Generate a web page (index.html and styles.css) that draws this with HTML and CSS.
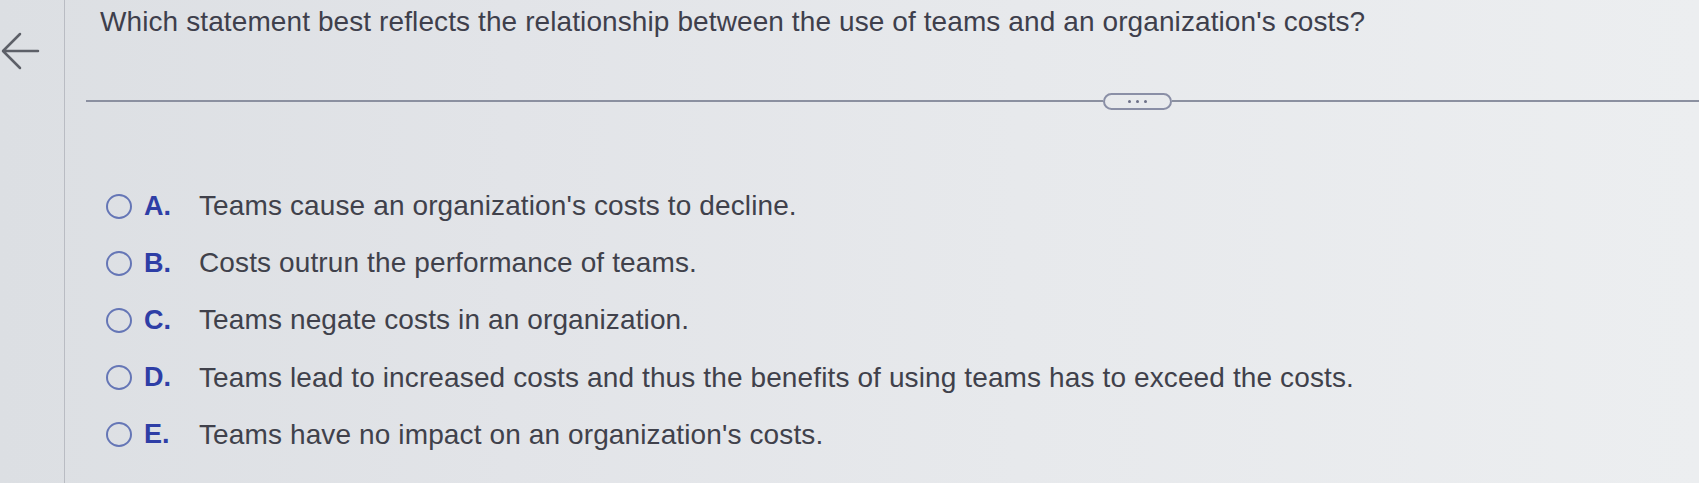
FILE: index.html
```html
<!DOCTYPE html>
<html>
<head>
<meta charset="utf-8">
<link rel="stylesheet" href="styles.css">
</head>
<body>
<div class="page">
  <aside class="side">
    <svg class="back" width="40" height="44" viewBox="0 0 40 44">
      <path d="M38 22 H4 M20 5 L3 22 L20 39" fill="none" stroke="#5d6068" stroke-width="2.5" stroke-linecap="round" stroke-linejoin="round"/>
    </svg>
  </aside>
  <main class="main">
    <h1 class="question">Which statement best reflects the relationship between the use of teams and an organization's costs?</h1>
    <div class="rule">
      <span class="line"></span>
      <span class="pill"><i></i><i></i><i></i></span>
      <span class="line"></span>
    </div>
    <ul class="options">
      <li class="option"><span class="radio"></span><span class="letter">A.</span><span class="text">Teams cause an organization's costs to decline.</span></li>
      <li class="option"><span class="radio"></span><span class="letter">B.</span><span class="text">Costs outrun the performance of teams.</span></li>
      <li class="option"><span class="radio"></span><span class="letter">C.</span><span class="text">Teams negate costs in an organization.</span></li>
      <li class="option"><span class="radio"></span><span class="letter">D.</span><span class="text">Teams lead to increased costs and thus the benefits of using teams has to exceed the costs.</span></li>
      <li class="option"><span class="radio"></span><span class="letter">E.</span><span class="text">Teams have no impact on an organization's costs.</span></li>
    </ul>
  </main>
</div>
</body>
</html>
```
FILE: styles.css
```css
html, body {
  margin: 0;
  padding: 0;
}
body {
  width: 1699px;
  height: 483px;
  overflow: hidden;
  background: linear-gradient(90deg, #dcdfe3 0%, #e2e4e8 30%, #e7e9ec 60%, #eceef0 100%);
  font-family: "Liberation Sans", Arial, sans-serif;
  color: #40414b;
}
.page {
  display: flex;
  height: 483px;
}
.side {
  width: 65px;
  flex: none;
  border-right: 1px solid #b9bcc3;
  box-sizing: border-box;
  padding-top: 29px;
}
.back {
  display: block;
  margin-left: 0;
}
.main {
  flex: 1;
  padding-left: 21px;
  display: flex;
  flex-direction: column;
}
.question {
  margin: 0;
  padding: 6px 0 0 14px;
  font-size: 28px;
  font-weight: normal;
  line-height: 32px;
  color: #3e3f4c;
  letter-spacing: 0.1px;
}
.rule {
  display: flex;
  align-items: center;
  margin-top: 54px;
  height: 18px;
}
.line {
  height: 2px;
  background: #8b90a0;
}
.line:first-child {
  width: 1017px;
}
.line:last-child {
  flex: 1;
}
.pill {
  width: 69px;
  height: 17px;
  box-sizing: border-box;
  border: 2px solid #8a8fa6;
  border-radius: 9px;
  display: flex;
  justify-content: center;
  align-items: center;
  gap: 5px;
}
.pill i {
  width: 3px;
  height: 3px;
  background: #6d7188;
  border-radius: 50%;
}
.options {
  list-style: none;
  margin: 80px 0 0 20px;
  padding: 0;
  display: flex;
  flex-direction: column;
  gap: 25.2px;
}
.option {
  display: flex;
  align-items: center;
  height: 32px;
}
.radio {
  width: 26px;
  height: 25px;
  box-sizing: border-box;
  border: 2.5px solid #6576b6;
  border-radius: 50%;
  flex: none;
}
.letter {
  margin-left: 12px;
  width: 55px;
  font-size: 27px;
  font-weight: bold;
  color: #2e3ea6;
}
.text {
  font-size: 28px;
  letter-spacing: 0.12px;
  color: #40414b;
}
```
